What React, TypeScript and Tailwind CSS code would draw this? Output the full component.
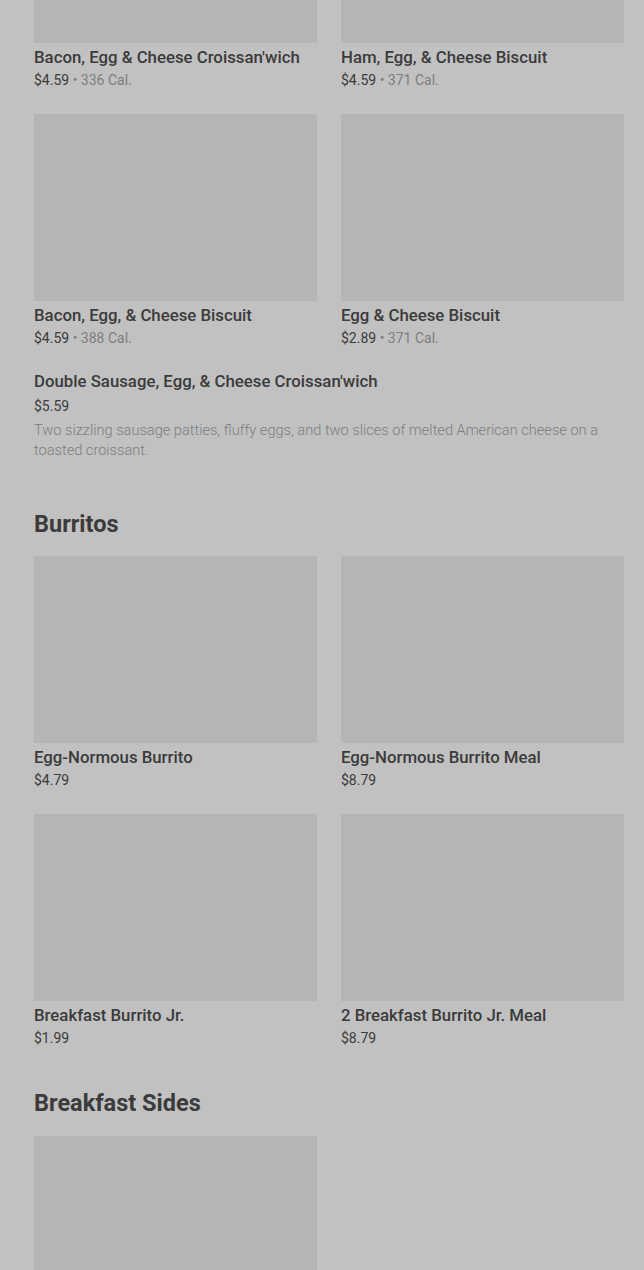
const topRows = [
  [
    { name: "Bacon, Egg & Cheese Croissan'wich", price: "$4.59", cal: "336 Cal." },
    { name: "Ham, Egg, & Cheese Biscuit", price: "$4.59", cal: "371 Cal." },
  ],
  [
    { name: "Bacon, Egg, & Cheese Biscuit", price: "$4.59", cal: "388 Cal." },
    { name: "Egg & Cheese Biscuit", price: "$2.89", cal: "371 Cal." },
  ],
];

const burritos = [
  { name: "Egg-Normous Burrito", price: "$4.79" },
  { name: "Egg-Normous Burrito Meal", price: "$8.79" },
  { name: "Breakfast Burrito Jr.", price: "$1.99" },
  { name: "2 Breakfast Burrito Jr. Meal", price: "$8.79" },
];

type Item = { name: string; price: string; cal?: string };

const Card = ({ item }: { item: Item }) => (
  <div className="flex flex-col">
    <div className="h-[187px] w-full bg-[#b5b5b5]" />
    <div className="mt-[2px] text-[16.8px] leading-6 font-medium text-[#3b3b3b]">{item.name}</div>
    <div className="mt-[1px] text-[14px] leading-5 text-[#3b3b3b]">
      {item.price}
      {item.cal && <span className="text-[#7e7e7e]"> • {item.cal}</span>}
    </div>
  </div>
);

const App = () => {
  return (
    <div className="h-[1270px] bg-[#c1c1c1] overflow-hidden font-['Roboto',sans-serif]">
      <div className="-mt-[144px] pl-[34px] pr-[20px]">
        <div className="grid grid-cols-2 gap-x-6 gap-y-6">
          {topRows.flat().map((item) => (
            <Card key={item.name} item={item} />
          ))}
        </div>

        {/* list-style item without image */}
        <div className="mt-[21px]">
          <div className="text-[16.8px] leading-6 font-medium text-[#3b3b3b]">
            Double Sausage, Egg, &amp; Cheese Croissan'wich
          </div>
          <div className="mt-[3px] text-[14px] leading-5 text-[#3b3b3b]">$5.59</div>
          <p className="mt-[4px] text-[14.6px] leading-5 font-light text-[#7e7e7e] pr-4">
            Two sizzling sausage patties, fluffy eggs, and two slices of melted American cheese on a toasted croissant.
          </p>
        </div>

        <h2 className="mt-[48px] text-[23.5px] leading-8 font-bold text-[#3b3b3b]">Burritos</h2>
        <div className="mt-4 grid grid-cols-2 gap-x-6 gap-y-6">
          {burritos.map((item) => (
            <Card key={item.name} item={item} />
          ))}
        </div>

        <h2 className="mt-[39px] text-[23.5px] leading-8 font-bold text-[#3b3b3b]">Breakfast Sides</h2>
        <div className="mt-[17px] grid grid-cols-2 gap-x-6 gap-y-6">
          <div className="h-[187px] w-full bg-[#b5b5b5]" />
        </div>
      </div>
    </div>
  );
};

export default App;
